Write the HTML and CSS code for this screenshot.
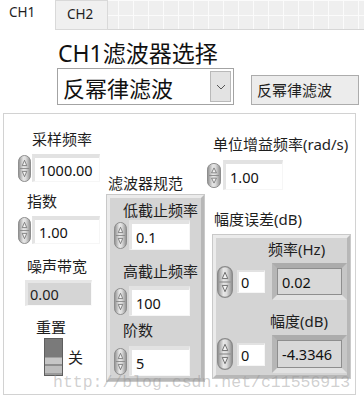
FILE: index.html
```html
<!DOCTYPE html>
<html>
    <head>
        <meta charset="utf-8">
        <title>CH1 滤波器选择</title>
        <link rel="stylesheet" href="styles.css">
    </head>
    <body>
        <svg class="defs" width="0" height="0">
            <defs>
                <linearGradient id="spin-fill" x1="0" x2="1" y1="0" y2="0">
                    <stop offset="0" stop-color="#8e8e8e"/>
                    <stop offset="0.4" stop-color="#e6e6e6"/>
                    <stop offset="0.6" stop-color="#dddddd"/>
                    <stop offset="1" stop-color="#8e8e8e"/>
                </linearGradient>
                <symbol id="spin" viewBox="0 0 14 28" preserveAspectRatio="none">
                    <rect x="0.5" y="0.5" width="13" height="27" rx="6.5" fill="url(#spin-fill)" stroke="#8a8a8a"/>
                    <path d="M2 14h10" stroke="#8c8c8c" stroke-width="1"/>
                    <path d="M4.6 11 7 5.5 9.4 11z" fill="#f2f2f2" stroke="#666" stroke-width="0.8"/>
                    <path d="M4.6 17 7 22.5 9.4 17z" fill="#f2f2f2" stroke="#666" stroke-width="0.8"/>
                </symbol>
            </defs>
        </svg>

        <div class="tabs">
            <div class="tab tab-on">CH1</div>
            <div class="tab tab-off">CH2</div>
            <div class="tab-grid"></div>
        </div>

        <div class="title">CH1滤波器选择</div>
        <div class="pick-row">
            <div class="pick">
                <span>反幂律滤波</span>
                <span class="pick-btn">
                    <svg width="10" height="6" viewBox="0 0 10 6"><path d="M1 1l4 4 4-4" fill="none" stroke="#555" stroke-width="1"/></svg>
                </span>
            </div>
            <div class="str-ind">反幂律滤波</div>
        </div>

        <div class="panel">
            <!-- left column -->
            <div class="col">
                <div class="lbl a-rate">采样频率</div>
                <div class="row a-row">
                    <svg class="spin"><use href="#spin"/></svg>
                    <div class="num a-num">1000.00</div>
                </div>
                <div class="lbl a-exp">指数</div>
                <div class="row a-row">
                    <svg class="spin"><use href="#spin"/></svg>
                    <div class="num a-num">1.00</div>
                </div>
                <div class="lbl a-noise">噪声带宽</div>
                <div class="ind a-ind">0.00</div>
                <div class="lbl a-reset">重置</div>
                <div class="switch-row">
                    <div class="switch"></div>
                    <span class="lbl">关</span>
                </div>
            </div>

            <!-- middle column -->
            <div class="col">
                <div class="lbl b-title">滤波器规范</div>
                <div class="cluster b-cluster">
                    <div class="lbl b-lbl b-first">低截止频率</div>
                    <div class="row b-row b-row1">
                        <svg class="spin"><use href="#spin"/></svg>
                        <div class="num b-num">0.1</div>
                    </div>
                    <div class="lbl b-lbl b-second">高截止频率</div>
                    <div class="row b-row b-row2">
                        <svg class="spin"><use href="#spin"/></svg>
                        <div class="num b-num">100</div>
                    </div>
                    <div class="lbl b-lbl b-third">阶数</div>
                    <div class="row b-row b-row3">
                        <svg class="spin"><use href="#spin"/></svg>
                        <div class="num b-num">5</div>
                    </div>
                </div>
            </div>

            <!-- right column -->
            <div class="col">
                <div class="lbl c-gain">单位增益频率(rad/s)</div>
                <div class="row c-row">
                    <svg class="spin spin-m"><use href="#spin"/></svg>
                    <div class="num c-num">1.00</div>
                </div>
                <div class="lbl c-err">幅度误差(dB)</div>
                <div class="cluster c-cluster">
                    <div class="lbl c-freq">频率(Hz)</div>
                    <div class="row c-pair c-pair1">
                        <svg class="spin spin-l"><use href="#spin"/></svg>
                        <div class="num small-num">0</div>
                        <div class="ind2"><span>0.02</span></div>
                    </div>
                    <div class="lbl c-amp">幅度(dB)</div>
                    <div class="row c-pair c-pair2">
                        <svg class="spin spin-l"><use href="#spin"/></svg>
                        <div class="num small-num">0</div>
                        <div class="ind2 ind2-tall"><span>-4.3346</span></div>
                    </div>
                </div>
            </div>
        </div>

        <div class="mark">http://blog.csdn.net/c11556913</div>
    </body>
</html>
```

FILE: styles.css
```css
html, body {
    margin: 0;
}
body {
    position: relative;
    width: 364px;
    height: 402px;
    overflow: hidden;
    background-color: white;
    font-family: "Noto Sans", "Noto Sans CJK SC", sans-serif;
    color: #1e1e1e;
}

.defs {
    display: block;
    width: 0;
    height: 0;
}

/* tab strip */
.tabs {
    display: flex;
    height: 30px;
}
.tab {
    box-sizing: border-box;
    font-size: 13.5px;
    line-height: 18px;
}
.tab-on {
    width: 55px;
    padding: 3px 0 0 9px;
    background: #fff;
}
.tab-off {
    width: 53px;
    padding: 4px 0 0 11px;
    background: #f0f0f0;
    border: 1px solid #d9d9d9;
}
.tab-grid {
    flex: 1;
    background-color: #efefef;
    background-image: linear-gradient(90deg, #fbfbfb 1px, transparent 1px),
                      linear-gradient(#fbfbfb 1px, transparent 1px);
    background-size: 15px 15px;
    background-position: 10px 0, 0 15px;
    border-bottom: 1px solid #d6d6d6;
}

/* selector */
.title {
    margin: 10px 0 0 58px;
    font-size: 23px;
    line-height: 26px;
    color: #111;
}
.pick-row {
    display: flex;
    margin-top: 2px;
}
.pick {
    display: flex;
    align-items: center;
    box-sizing: border-box;
    width: 177px;
    height: 37px;
    margin-left: 57px;
    padding-left: 5px;
    border: 1px solid #a3a3a3;
    font-size: 22px;
    color: #111;
}
.pick-btn {
    display: flex;
    align-items: center;
    justify-content: center;
    box-sizing: border-box;
    width: 21px;
    height: 31px;
    margin: 0 2px 0 auto;
    background: #e3e3e3;
    border: 1px solid #b9b9b9;
}
.str-ind {
    box-sizing: border-box;
    width: 108px;
    height: 30px;
    margin: 7px 0 0 17px;
    padding-left: 5px;
    background: #ececec;
    border: 1px solid #acacac;
    font-size: 15px;
    line-height: 28px;
}

/* front panel */
.panel {
    display: grid;
    grid-template-columns: 100px 101px 1fr;
    box-sizing: border-box;
    width: 353px;
    height: 282px;
    margin: 8px 0 0 3px;
    border: 1px solid #d2d2d2;
}
.col {
    display: flex;
    flex-direction: column;
    align-items: flex-start;
}
.lbl {
    font-size: 15px;
    line-height: 18px;
    white-space: nowrap;
}
.row {
    display: flex;
    align-items: center;
}
.spin {
    width: 13px;
    height: 27px;
    flex: none;
}
.spin-m {
    width: 14px;
    height: 25px;
}
.spin-l {
    width: 16px;
    height: 32px;
}
.num {
    display: flex;
    align-items: center;
    box-sizing: border-box;
    height: 28px;
    padding-left: 4px;
    background: #fff;
    border-style: solid;
    border-width: 4px 1px 1px 3px;
    border-color: #e2e2e2 #f6f6f6 #f6f6f6 #e4e4e4;
    font-size: 14.5px;
    color: #111;
}
.ind {
    display: flex;
    align-items: center;
    box-sizing: border-box;
    padding-left: 2px;
    background: #d5d5d5;
    border-style: solid;
    border-width: 3px 1px 1px 3px;
    border-color: #e6e6e6 #fafafa #fafafa #e6e6e6;
    font-size: 14.5px;
}
.cluster {
    box-sizing: border-box;
    display: flex;
    flex-direction: column;
    align-items: flex-start;
    background: #d4d4d4;
    border-style: solid;
    border-width: 3px;
    border-color: #ebebeb #b7b7b7 #b7b7b7 #ebebeb;
    box-shadow: 0 0 0 1px #c9c9c9;
}

/* left column */
.a-rate {
    margin: 16px 0 0 28px;
}
.a-row {
    margin: 6px 0 0 14px;
}
.a-num {
    width: 68px;
    margin-left: 1px;
}
.a-exp {
    margin: 10px 0 0 23px;
}
.a-noise {
    margin: 13px 0 0 23px;
}
.a-ind {
    width: 67px;
    height: 26px;
    margin: 5px 0 0 21px;
}
.a-reset {
    margin: 12px 0 0 32px;
}
.switch-row {
    display: flex;
    align-items: center;
    gap: 5px;
    margin: 2px 0 0 40px;
}
.switch {
    box-sizing: border-box;
    width: 19px;
    height: 38px;
    border: 1px solid #5e5e5e;
    background: linear-gradient(#7a7a7a 0 51%, #a0a0a0 51% 54%, #c6c6c6 54% 70%, #8e8e8e 70% 74%, #bdbdbd 74% 94%, #9a9a9a 94%);
}

/* middle column */
.b-title {
    margin: 60px 0 0 4px;
}
.b-cluster {
    width: 97px;
    height: 186px;
    margin: 3px 0 0 3px;
}
.b-lbl {
    margin-left: 13px;
}
.b-first {
    margin-top: 3px;
}
.b-second {
    margin-top: 12px;
}
.b-third {
    margin-top: 5px;
}
.b-row {
    margin-left: 4px;
}
.b-row1 {
    margin-top: 1px;
}
.b-row2 {
    margin-top: 6px;
}
.b-row3 {
    margin-top: 7px;
}
.b-num {
    width: 61px;
    height: 30px;
    margin-left: 2px;
}

/* right column */
.c-gain {
    margin: 21px 0 0 8px;
}
.c-row {
    margin: 7px 0 0 2px;
}
.c-num {
    width: 60px;
    height: 30px;
    margin-left: 2px;
}
.c-err {
    margin: 20px 0 0 9px;
}
.c-cluster {
    width: 137px;
    height: 143px;
    margin: 7px 0 0 8px;
}
.c-freq {
    margin: 2px 0 0 52px;
}
.c-amp {
    margin: 12px 0 0 54px;
}
.c-pair {
    margin: 5px 0 0 1px;
}
.small-num {
    width: 28px;
    height: 23px;
    margin-left: 4px;
    padding-left: 2px;
    border-width: 2px 1px 1px 2px;
}
.ind2 {
    display: flex;
    box-sizing: border-box;
    width: 75px;
    height: 37px;
    margin-left: 7px;
    border-style: solid;
    border-width: 5px;
    border-color: #acacac #c6c6c6 #e2e2e2 #b6b6b6;
}
.ind2-tall {
    height: 38px;
}
.ind2 span {
    display: flex;
    align-items: center;
    flex: 1;
    padding-left: 4px;
    background: #d8d8d8;
    border: 1px solid #8e8e8e;
    font-size: 14.5px;
    color: #111;
}

/* watermark laid over the panel */
.mark {
    position: absolute;
    left: 53px;
    top: 375px;
    font-family: "Liberation Mono", monospace;
    font-size: 16.5px;
    line-height: 16.5px;
    color: rgba(150, 150, 150, 0.45);
    white-space: nowrap;
}
```
